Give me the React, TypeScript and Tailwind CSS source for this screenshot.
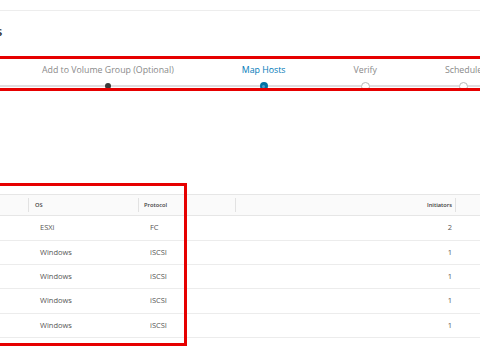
import React from "react"

type Step = { label: string; state: "done" | "active" | "todo" }

const steps: Step[] = [
    { label: "Add to Volume Group (Optional)", state: "done" },
    { label: "Map Hosts", state: "active" },
    { label: "Verify", state: "todo" },
    { label: "Schedule", state: "todo" },
    { label: "Summary", state: "todo" },
]

const hosts = [
    { os: "ESXi", protocol: "FC", initiators: 2, h: "h-[25px]" },
    { os: "Windows", protocol: "iSCSI", initiators: 1, h: "h-[24px]" },
    { os: "Windows", protocol: "iSCSI", initiators: 1, h: "h-[24px]" },
    { os: "Windows", protocol: "iSCSI", initiators: 1, h: "h-[25px]" },
    { os: "Windows", protocol: "iSCSI", initiators: 1, h: "h-[24px]" },
]

function Dot({ state }: { state: Step["state"] }) {
    if (state === "done") return <span className="block w-[6px] h-[6px] rounded-full bg-[#3a3a3a]" />
    if (state === "active")
        return (
            <span className="flex items-center justify-center w-[8px] h-[8px] rounded-full bg-[#0072a3]">
                <span className="block w-[3px] h-[3px] rounded-full bg-[#4a9fd0]" />
            </span>
        )
    return <span className="block w-[9px] h-[9px] rounded-full bg-white border border-[#b8b8b8]" />
}

function Line() {
    return <div className="flex-1 h-[2px] bg-[#e0dde0]" />
}

export default function App() {
    return (
        <div
            className="relative w-[480px] h-[356px] overflow-hidden bg-white"
            style={{ fontFamily: '"Open Sans", "Liberation Sans", sans-serif' }}
        >
            <div className="h-[11px] border-b border-[#ededed]" />
            <div className="h-[45px] pt-[12px]">
                <h1 className="-ml-[4px] text-[13px] leading-[16px] font-semibold text-[#333]">s</h1>
            </div>

            {/* stepper */}
            <div className="flex pt-[8px] whitespace-nowrap overflow-hidden">
                <div className="flex flex-col w-[8px] shrink-0">
                    <div className="h-[12px]" />
                    <div className="mt-[6px] h-[8px] flex items-center">
                        <Line />
                    </div>
                </div>
                {steps.map((s) => (
                    <div key={s.label} className="flex flex-col shrink-0">
                        <div
                            className={`px-[34px] text-[8.8px] leading-[12px] ${
                                s.state === "active" ? "text-[#0079b8]" : "text-[#8a8a8a]"
                            }`}
                        >
                            {s.label}
                        </div>
                        <div className="mt-[6px] h-[8px] flex items-center">
                            <Line />
                            <Dot state={s.state} />
                            <Line />
                        </div>
                    </div>
                ))}
            </div>

            {/* hosts grid */}
            <div className="mt-[104px] text-[#565656]">
                <div className="flex h-[22px] border-y border-[#e6e6e6] bg-[#fafafa] text-[5.7px] font-semibold text-[#3c3c3c]">
                    <div className="w-[29px] flex items-center justify-end">
                        <span className="w-px h-[14px] bg-[#e2e2e2]" />
                    </div>
                    <div className="w-[110px] flex items-center pl-[6px]">
                        <span className="flex-1">OS</span>
                        <span className="w-px h-[14px] bg-[#e2e2e2]" />
                    </div>
                    <div className="w-[97px] flex items-center pl-[5px]">
                        <span className="flex-1">Protocol</span>
                        <span className="w-px h-[14px] bg-[#e2e2e2]" />
                    </div>
                    <div className="w-[220px] flex items-center">
                        <span className="flex-1 text-right pr-[3px]">Initiators</span>
                        <span className="w-px h-[14px] bg-[#e2e2e2]" />
                    </div>
                    <div className="flex-1" />
                </div>
                {hosts.map((h, i) => (
                    <div key={i} className={`flex items-center ${h.h} border-b border-[#ececec] text-[7.5px]`}>
                        <div className="w-[29px]" />
                        <div className="w-[110px] pl-[11px]">{h.os}</div>
                        <div className="w-[97px] pl-[11px]">{h.protocol}</div>
                        <div className="w-[220px] text-right pr-[4px]">{h.initiators}</div>
                        <div className="flex-1" />
                    </div>
                ))}
            </div>

            {/* annotation boxes */}
            <div className="absolute left-[-10px] top-[56px] w-[500px] h-[35px] border-[3px] border-[#e60000]" />
            <div className="absolute left-[-10px] top-[183px] w-[197px] h-[163px] border-[3px] border-[#e60000]" />
        </div>
    )
}
